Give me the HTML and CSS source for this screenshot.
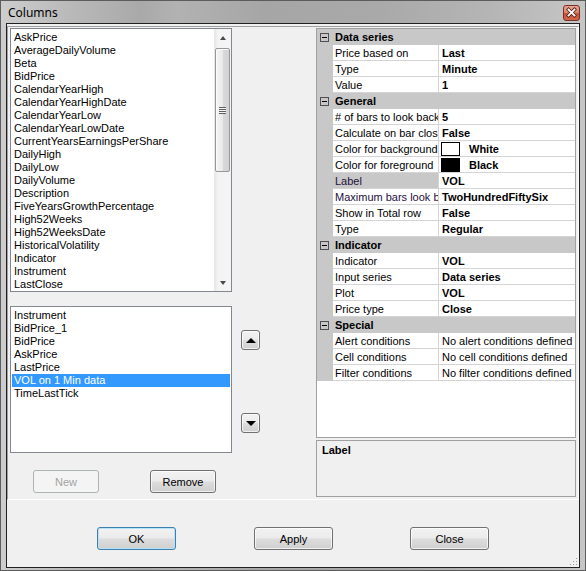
FILE: index.html
```html
<!DOCTYPE html>
<html>
<head>
<meta charset="utf-8">
<link rel="stylesheet" href="styles.css">
</head>
<body>
<div class="window">
  <div class="titlebar">
    <span class="title">Columns</span>
    <span class="close">
      <svg width="17" height="16" viewBox="0 0 17 16">
        <path d="M5.5 4.5 L11.5 10.5 M11.5 4.5 L5.5 10.5" stroke="#5a1d12" stroke-width="3.4" stroke-linecap="square"/>
        <path d="M5.5 4.5 L11.5 10.5 M11.5 4.5 L5.5 10.5" stroke="#ffffff" stroke-width="1.8" stroke-linecap="square"/>
      </svg>
    </span>
  </div>
  <div class="client">
    <div class="upper">
      <div class="left">
        <div class="list list-top">
          <div class="items">
            <div class="item">AskPrice</div>
            <div class="item">AverageDailyVolume</div>
            <div class="item">Beta</div>
            <div class="item">BidPrice</div>
            <div class="item">CalendarYearHigh</div>
            <div class="item">CalendarYearHighDate</div>
            <div class="item">CalendarYearLow</div>
            <div class="item">CalendarYearLowDate</div>
            <div class="item">CurrentYearsEarningsPerShare</div>
            <div class="item">DailyHigh</div>
            <div class="item">DailyLow</div>
            <div class="item">DailyVolume</div>
            <div class="item">Description</div>
            <div class="item">FiveYearsGrowthPercentage</div>
            <div class="item">High52Weeks</div>
            <div class="item">High52WeeksDate</div>
            <div class="item">HistoricalVolatility</div>
            <div class="item">Indicator</div>
            <div class="item">Instrument</div>
            <div class="item">LastClose</div>
          </div>
          <div class="vscroll">
            <div class="sb-arrow"><span class="tri-up-s"></span></div>
            <div class="sb-track">
              <div class="sb-thumb"><span class="grip"></span></div>
            </div>
            <div class="sb-arrow"><span class="tri-down-s"></span></div>
          </div>
        </div>
        <div class="list list-bottom">
          <div class="items">
            <div class="item">Instrument</div>
            <div class="item">BidPrice_1</div>
            <div class="item">BidPrice</div>
            <div class="item">AskPrice</div>
            <div class="item">LastPrice</div>
            <div class="item selected">VOL on 1 Min data</div>
            <div class="item">TimeLastTick</div>
          </div>
        </div>
        <div class="btnrow">
          <div class="btn btn-new disabled">New</div>
          <div class="btn btn-remove">Remove</div>
        </div>
      </div>
      <div class="middle">
        <div class="mbtn"><span class="tri-up"></span></div>
        <div class="mbtn mbtn-down"><span class="tri-down"></span></div>
      </div>
      <div class="right">
        <div class="grid">
          <div class="cat"><span class="minus"></span><span class="cat-label">Data series</span></div>
          <div class="row"><span class="m"></span><span class="n">Price based on</span><span class="v">Last</span></div>
          <div class="row"><span class="m"></span><span class="n">Type</span><span class="v">Minute</span></div>
          <div class="row"><span class="m"></span><span class="n">Value</span><span class="v">1</span></div>
          <div class="cat"><span class="minus"></span><span class="cat-label">General</span></div>
          <div class="row"><span class="m"></span><span class="n"># of bars to look back</span><span class="v">5</span></div>
          <div class="row"><span class="m"></span><span class="n">Calculate on bar close</span><span class="v">False</span></div>
          <div class="row"><span class="m"></span><span class="n">Color for background</span><span class="v"><span class="swatch sw-white"></span>White</span></div>
          <div class="row"><span class="m"></span><span class="n">Color for foreground</span><span class="v"><span class="swatch sw-black"></span>Black</span></div>
          <div class="row"><span class="m"></span><span class="n sel">Label</span><span class="v">VOL</span></div>
          <div class="row"><span class="m"></span><span class="n dim">Maximum bars look back</span><span class="v">TwoHundredFiftySix</span></div>
          <div class="row"><span class="m"></span><span class="n">Show in Total row</span><span class="v">False</span></div>
          <div class="row"><span class="m"></span><span class="n">Type</span><span class="v">Regular</span></div>
          <div class="cat"><span class="minus"></span><span class="cat-label">Indicator</span></div>
          <div class="row"><span class="m"></span><span class="n">Indicator</span><span class="v">VOL</span></div>
          <div class="row"><span class="m"></span><span class="n">Input series</span><span class="v">Data series</span></div>
          <div class="row"><span class="m"></span><span class="n">Plot</span><span class="v">VOL</span></div>
          <div class="row"><span class="m"></span><span class="n">Price type</span><span class="v">Close</span></div>
          <div class="cat"><span class="minus"></span><span class="cat-label">Special</span></div>
          <div class="row"><span class="m"></span><span class="n">Alert conditions</span><span class="v plain">No alert conditions defined</span></div>
          <div class="row"><span class="m"></span><span class="n">Cell conditions</span><span class="v plain">No cell conditions defined</span></div>
          <div class="row"><span class="m"></span><span class="n">Filter conditions</span><span class="v plain">No filter conditions defined</span></div>
        </div>
        <div class="desc"><span class="desc-title">Label</span></div>
      </div>
    </div>
    <div class="lower">
      <div class="btn btn-ok">OK</div>
      <div class="btn btn-apply">Apply</div>
      <div class="btn btn-close">Close</div>
    </div>
    <div class="sizegrip">
      <svg width="9" height="9" viewBox="0 0 9 9">
        <rect x="7" y="1" width="1" height="1" fill="#9a9a9a"/>
        <rect x="4" y="4" width="1" height="1" fill="#9a9a9a"/>
        <rect x="7" y="4" width="1" height="1" fill="#9a9a9a"/>
        <rect x="1" y="7" width="1" height="1" fill="#9a9a9a"/>
        <rect x="4" y="7" width="1" height="1" fill="#9a9a9a"/>
        <rect x="7" y="7" width="1" height="1" fill="#9a9a9a"/>
      </svg>
    </div>
  </div>
</div>
</body>
</html>
```
FILE: styles.css
```css
* { box-sizing: border-box; }
html, body { margin: 0; padding: 0; }
body {
  width: 586px;
  height: 571px;
  font-family: "Liberation Sans", Arial, sans-serif;
  font-size: 11px;
  color: #000;
  overflow: hidden;
}
.window {
  width: 586px;
  height: 571px;
  border: 1px solid #5c5c5c;
  padding: 0 5px 2px 5px;
  display: flex;
  flex-direction: column;
  background: linear-gradient(to right, #cdcdcd 0%, #b9b9b9 12%, #a9a9a9 24%, #b2b2b2 30%, #a6a6a6 45%, #a9a9a9 65%, #b6b6b6 85%, #c6c6c6 100%);
}
.titlebar {
  height: 22px;
  display: flex;
  align-items: flex-start;
  justify-content: space-between;
}
.title {
  font-family: "Noto Sans", "Open Sans", sans-serif;
  font-size: 12px;
  color: #000;
  margin-left: 2px;
  margin-top: 4px;
  line-height: 16px;
}
.close {
  width: 17px;
  height: 16px;
  margin-top: 4px;
  border: 1px solid #7b2e22;
  border-radius: 3px;
  background: linear-gradient(#e8a593 0%, #d98670 45%, #c8503a 55%, #d2654b 100%);
  display: flex;
  align-items: center;
  justify-content: center;
  overflow: hidden;
}
.close svg { display: block; flex: none; }
.client {
  flex: 1;
  border: 1px solid #202020;
  background: #f0f0f0;
  display: flex;
  flex-direction: column;
  position: relative;
}
.upper {
  margin-top: 2px;
  height: 474px;
  display: flex;
  border-top: 1px solid #a0a0a0;
  border-left: 1px solid #a0a0a0;
  border-bottom: 1px solid #ffffff;
  border-right: 1px solid #ffffff;
}
.left {
  width: 224px;
  padding-top: 1px;
  padding-left: 2px;
  display: flex;
  flex-direction: column;
}
.list {
  width: 222px;
  background: #fff;
  border: 1px solid #828790;
  display: flex;
}
.list-top { height: 264px; }
.list-bottom { height: 147px; margin-top: 14px; }
.items {
  flex: 1;
  padding-top: 2px;
  overflow: hidden;
}
.item {
  height: 13px;
  line-height: 13px;
  margin: 0 1px;
  padding-left: 2px;
  white-space: nowrap;
}
.item.selected {
  background: #3399ff;
  color: #fff;
}
.vscroll {
  width: 17px;
  display: flex;
  flex-direction: column;
  background: linear-gradient(to right, #e6e6e6 0%, #f4f4f4 25%, #f4f4f4 100%);
}
.sb-arrow {
  height: 17px;
  display: flex;
  align-items: center;
  justify-content: center;
}
.sb-track {
  flex: 1;
  padding-top: 2px;
}
.sb-thumb {
  margin: 0 1px 0 1px;
  height: 124px;
  border: 1px solid #979797;
  border-radius: 2px;
  background: linear-gradient(to right, #f5f5f5 0%, #e9e9e9 50%, #d9d9d9 51%, #d2d2d2 100%);
  box-shadow: inset 1px 1px 0 #fbfbfb;
  display: flex;
  align-items: center;
  justify-content: center;
}
.grip {
  width: 7px;
  height: 7px;
  background: repeating-linear-gradient(#5f5f5f 0 1px, #f5f5f5 1px 2px);
}
.tri-up-s {
  width: 0; height: 0;
  border-left: 3.5px solid transparent;
  border-right: 3.5px solid transparent;
  border-bottom: 4px solid #4a4a4a;
}
.tri-down-s {
  width: 0; height: 0;
  border-left: 3.5px solid transparent;
  border-right: 3.5px solid transparent;
  border-top: 4px solid #4a4a4a;
}
.btnrow {
  margin-top: 17px;
  display: flex;
}
.btn {
  height: 23px;
  border: 1px solid #707070;
  border-radius: 3px;
  background: linear-gradient(#f2f2f2 0%, #ebebeb 48%, #dddddd 52%, #cfcfcf 100%);
  box-shadow: inset 0 0 0 1px rgba(255,255,255,0.7);
  display: flex;
  align-items: center;
  justify-content: center;
  font-size: 11px;
}
.btn-new { width: 66px; margin-left: 23px; }
.btn-remove { width: 66px; margin-left: 51px; }
.btn.disabled {
  border-color: #adb2b5;
  background: #f4f4f4;
  box-shadow: none;
  color: #a3a3a3;
}
.middle {
  width: 84px;
  padding-top: 303px;
  padding-left: 9px;
  display: flex;
  flex-direction: column;
}
.mbtn {
  width: 19px;
  height: 20px;
  border: 1px solid #707070;
  border-radius: 3px;
  background: linear-gradient(#f2f2f2 0%, #ebebeb 48%, #dddddd 52%, #cfcfcf 100%);
  box-shadow: inset 0 0 0 1px rgba(255,255,255,0.7);
  display: flex;
  align-items: center;
  justify-content: center;
}
.mbtn-down { margin-top: 63px; }
.tri-up {
  width: 0; height: 0;
  border-left: 5px solid transparent;
  border-right: 5px solid transparent;
  border-bottom: 5px solid #000;
}
.tri-down {
  width: 0; height: 0;
  border-left: 5px solid transparent;
  border-right: 5px solid transparent;
  border-top: 5px solid #000;
}
.right {
  flex: 1;
  padding-top: 1px;
  display: flex;
  flex-direction: column;
}
.grid {
  width: 260px;
  height: 410px;
  border: 1px solid #a0a0a0;
  background: #fff;
}
.cat {
  height: 16px;
  padding-top: 1px;
  background: #c8c8c8;
  display: flex;
  align-items: center;
}
.minus {
  width: 9px;
  height: 9px;
  margin-left: 3px;
  border: 1px solid #4f4f4f;
  position: relative;
}
.minus::after {
  content: "";
  position: absolute;
  left: 1px;
  top: 3px;
  width: 5px;
  height: 1px;
  background: #000;
}
.cat-label {
  font-weight: bold;
  margin-left: 6px;
  line-height: 15px;
}
.row {
  height: 16px;
  display: flex;
}
.m {
  width: 16px;
  flex: none;
  background: #c8c8c8;
}
.n {
  width: 106px;
  flex: none;
  padding-left: 2px;
  padding-top: 2px;
  border-right: 1px solid #d4d4d4;
  border-bottom: 1px solid #d4d4d4;
  line-height: 13px;
  white-space: nowrap;
  overflow: hidden;
}
.n.sel {
  background: #c8c8c8;
  color: #24103e;
}
.n.dim { color: #24103e; }
.v {
  flex: 1;
  padding-left: 3px;
  padding-top: 2px;
  border-bottom: 1px solid #d4d4d4;
  line-height: 13px;
  font-weight: bold;
  white-space: nowrap;
  overflow: hidden;
  display: flex;
  align-items: center;
}
.v.plain { font-weight: normal; }
.swatch {
  width: 19px;
  height: 14px;
  border: 1px solid #000;
  margin-left: -1px;
  margin-right: 9px;
  margin-top: -2px;
  flex: none;
}
.sw-white { background: #fff; }
.sw-black { background: #000; }
.desc {
  margin-top: 2px;
  width: 260px;
  height: 57px;
  border: 1px solid #a0a0a0;
  background: #f0f0f0;
  padding: 3px 0 0 5px;
}
.desc-title {
  font-weight: bold;
  line-height: 13px;
}
.lower {
  flex: 1;
  display: flex;
  align-items: flex-start;
  padding-top: 27px;
  padding-left: 90px;
}
.btn-ok, .btn-apply, .btn-close { width: 79px; }
.btn-ok {
  border-color: #3c7fb1;
  box-shadow: inset 0 0 0 1px #b5e3f9;
}
.btn-apply { margin-left: 78px; }
.btn-close { margin-left: 77px; }
.sizegrip {
  position: absolute;
  right: 1px;
  bottom: 1px;
  width: 9px;
  height: 9px;
}
.sizegrip svg { display: block; }
```
